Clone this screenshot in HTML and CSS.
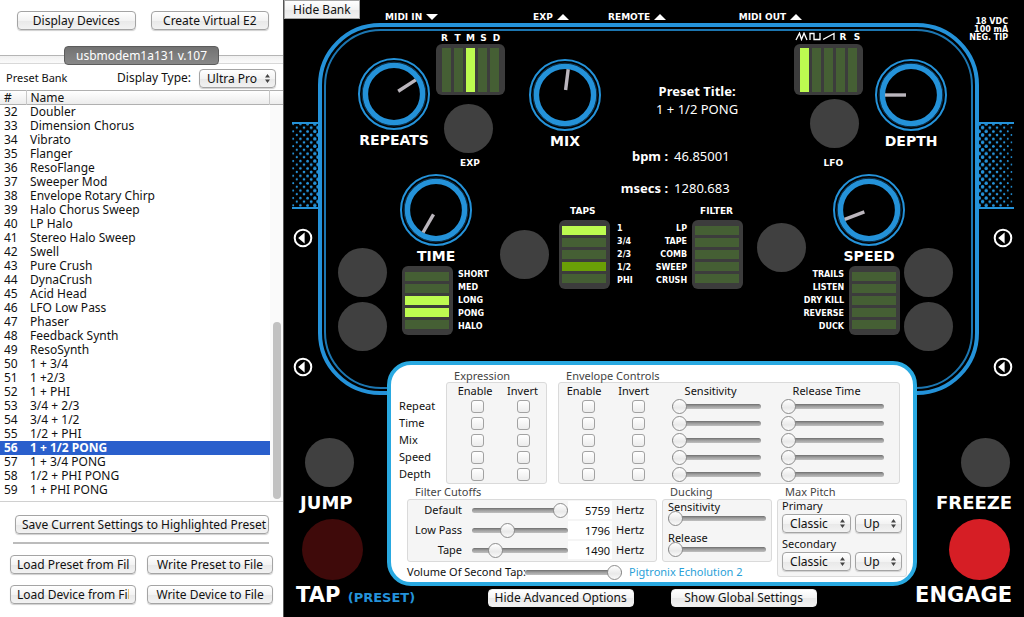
FILE: index.html
```html
<!DOCTYPE html>
<html lang="en">
<head>
<meta charset="utf-8">
<title>Echolution 2 Editor</title>
<link rel="stylesheet" href="styles.css">
</head>
<body>
<div class="app">
  <aside class="bank">
    <div class="bank-actions">
      <button class="btn">Display Devices</button>
      <button class="btn">Create Virtual E2</button>
    </div>
    <div class="device-tabs"><button class="device-tab">usbmodem1a131 v.107</button></div>
    <div class="bank-bar">
      <span class="bank-title">Preset Bank</span>
      <label for="display-type">Display Type:</label>
      <select id="display-type" class="select select-type"><option>Ultra Pro</option></select>
    </div>
    <div class="list">
      <table class="presets">
        <thead><tr><th class="num">#</th><th>Name</th></tr></thead>
        <tbody>
          <tr><td>32</td><td>Doubler</td></tr>
          <tr><td>33</td><td>Dimension Chorus</td></tr>
          <tr><td>34</td><td>Vibrato</td></tr>
          <tr><td>35</td><td>Flanger</td></tr>
          <tr><td>36</td><td>ResoFlange</td></tr>
          <tr><td>37</td><td>Sweeper Mod</td></tr>
          <tr><td>38</td><td>Envelope Rotary Chirp</td></tr>
          <tr><td>39</td><td>Halo Chorus Sweep</td></tr>
          <tr><td>40</td><td>LP Halo</td></tr>
          <tr><td>41</td><td>Stereo Halo Sweep</td></tr>
          <tr><td>42</td><td>Swell</td></tr>
          <tr><td>43</td><td>Pure Crush</td></tr>
          <tr><td>44</td><td>DynaCrush</td></tr>
          <tr><td>45</td><td>Acid Head</td></tr>
          <tr><td>46</td><td>LFO Low Pass</td></tr>
          <tr><td>47</td><td>Phaser</td></tr>
          <tr><td>48</td><td>Feedback Synth</td></tr>
          <tr><td>49</td><td>ResoSynth</td></tr>
          <tr><td>50</td><td>1 + 3/4</td></tr>
          <tr><td>51</td><td>1 +2/3</td></tr>
          <tr><td>52</td><td>1 + PHI</td></tr>
          <tr><td>53</td><td>3/4 + 2/3</td></tr>
          <tr><td>54</td><td>3/4 + 1/2</td></tr>
          <tr><td>55</td><td>1/2 + PHI</td></tr>
          <tr class="selected"><td>56</td><td>1 + 1/2 PONG</td></tr>
          <tr><td>57</td><td>1 + 3/4 PONG</td></tr>
          <tr><td>58</td><td>1/2 + PHI PONG</td></tr>
          <tr><td>59</td><td>1 + PHI PONG</td></tr>
        </tbody>
      </table>
      <div class="scroll"><div class="scroll-thumb"></div></div>
    </div>
    <div class="bank-foot">
      <button class="btn save">Save Current Settings to Highlighted Preset</button>
      <hr class="rule">
      <div class="file-actions">
        <button class="btn"><span class="clip">Load Preset from File</span></button>
        <button class="btn">Write Preset to File</button>
        <button class="btn"><span class="clip">Load Device from File</span></button>
        <button class="btn">Write Device to File</button>
      </div>
    </div>
  </aside>

  <main class="pedal">
    <svg class="defs" width="0" height="0" aria-hidden="true">
      <defs>
        <symbol id="dial" viewBox="-37 -37 74 74">
          <circle r="35" fill="#000" stroke="#2492d9" stroke-width="2"/>
          <circle r="32" fill="none" stroke="#0c3552" stroke-width="1"/>
          <circle r="28.6" fill="none" stroke="#2492d9" stroke-width="5.4"/>
        </symbol>
        <symbol id="jack" viewBox="0 0 20 20">
          <circle cx="10" cy="10" r="8.3" fill="#000" stroke="#fff" stroke-width="2"/>
          <path d="M5.2 10 11.6 4.6V15.4Z" fill="#fff"/>
        </symbol>
        <pattern id="dots-right" width="36" height="7.4" patternUnits="userSpaceOnUse">
          <g fill="#2492d9">
            <circle cx="1" cy="2" r="2"/><circle cx="4.6" cy="5.6" r="1.8"/><circle cx="8.2" cy="2" r="1.7"/><circle cx="11.8" cy="5.6" r="1.5"/><circle cx="15.4" cy="2" r="1.4"/><circle cx="19" cy="5.6" r="1.3"/><circle cx="22.6" cy="2" r="1.2"/><circle cx="26.2" cy="5.6" r="1.1"/><circle cx="29.8" cy="2" r="1"/><circle cx="33.4" cy="5.6" r=".9"/>
          </g>
        </pattern>
        <pattern id="dots-left" width="27" height="7.4" patternUnits="userSpaceOnUse">
          <g fill="#2492d9">
            <circle cx="1.2" cy="2" r="1"/><circle cx="4.8" cy="5.6" r="1.1"/><circle cx="8.4" cy="2" r="1.2"/><circle cx="12" cy="5.6" r="1.3"/><circle cx="15.6" cy="2" r="1.4"/><circle cx="19.2" cy="5.6" r="1.5"/><circle cx="22.8" cy="2" r="1.7"/><circle cx="26" cy="5.6" r="1.8"/>
          </g>
        </pattern>
      </defs>
    </svg>

    <section class="deck">
      <svg class="mesh mesh-left" width="27" height="87" aria-hidden="true"><rect width="27" height="87" fill="url(#dots-left)"/><path d="M0 1H27M0 86H27" stroke="#2492d9" stroke-width="2"/></svg>
      <svg class="mesh mesh-right" width="36" height="87" aria-hidden="true"><rect width="36" height="87" fill="url(#dots-right)"/><path d="M0 1H36M0 86H36" stroke="#2492d9" stroke-width="2"/></svg>
      <div class="frame"></div>

      <button class="btn hide-bank">Hide Bank</button>
      <span class="port midi-in">MIDI IN <i class="tri down"></i></span>
      <span class="port exp-in">EXP <i class="tri"></i></span>
      <span class="port remote">REMOTE <i class="tri"></i></span>
      <span class="port midi-out">MIDI OUT <i class="tri"></i></span>
      <p class="power">18 VDC<br>100 mA<br>NEG. TIP</p>

      <label class="knob k-repeats"><svg class="dial" aria-hidden="true" viewBox="-37 -37 74 74"><use href="#dial" x="-37" y="-37" width="74" height="74"/><path d="M0-5V-26" transform="rotate(57)" class="hand"/></svg><input type="range" value="72"><span class="name">REPEATS</span></label>
      <label class="knob k-mix"><svg class="dial" aria-hidden="true" viewBox="-37 -37 74 74"><use href="#dial" x="-37" y="-37" width="74" height="74"/><path d="M0-5V-26" transform="rotate(7)" class="hand"/></svg><input type="range" value="52"><span class="name">MIX</span></label>
      <label class="knob k-depth"><svg class="dial" aria-hidden="true" viewBox="-37 -37 74 74"><use href="#dial" x="-37" y="-37" width="74" height="74"/><path d="M0-5V-26" transform="rotate(270)" class="hand"/></svg><input type="range" value="20"><span class="name">DEPTH</span></label>
      <label class="knob k-time"><svg class="dial" aria-hidden="true" viewBox="-37 -37 74 74"><use href="#dial" x="-37" y="-37" width="74" height="74"/><path d="M0-5V-26" transform="rotate(210)" class="hand"/></svg><input type="range" value="0"><span class="name">TIME</span></label>
      <label class="knob k-speed"><svg class="dial" aria-hidden="true" viewBox="-37 -37 74 74"><use href="#dial" x="-37" y="-37" width="74" height="74"/><path d="M0-5V-26" transform="rotate(249)" class="hand"/></svg><input type="range" value="13"><span class="name">SPEED</span></label>

      <div class="letters l-exp"><span>R</span><span>T</span><span>M</span><span>S</span><span>D</span></div>
      <div class="leds upright led-exp"><i></i><i></i><i class="on"></i><i></i><i></i></div>
      <button class="stomp s-exp" aria-label="EXP"></button>
      <span class="tag t-exp">EXP</span>

      <div class="letters l-lfo">
        <svg width="13" height="9" viewBox="0 0 13 9" aria-hidden="true"><path d="M1 8 4.5 1.2 6.5 7.5 9 1.2 12 8" class="wave"/></svg>
        <svg width="13" height="9" viewBox="0 0 13 9" aria-hidden="true"><path d="M1 8V1.5H5V7.5H11V1" class="wave"/></svg>
        <svg width="13" height="9" viewBox="0 0 13 9" aria-hidden="true"><path d="M0 7.5 11 1.5V8" class="wave"/></svg>
        <span>R</span><span>S</span>
      </div>
      <div class="leds upright led-lfo"><i class="on"></i><i></i><i></i><i></i><i></i></div>
      <button class="stomp s-lfo" aria-label="LFO"></button>
      <span class="tag t-lfo">LFO</span>

      <button class="stomp s-time1" aria-label="Time range"></button>
      <button class="stomp s-time2" aria-label="Pong and halo"></button>
      <button class="stomp s-taps" aria-label="Taps"></button>
      <button class="stomp s-filter" aria-label="Filter"></button>
      <button class="stomp s-speed1" aria-label="Trails and listen"></button>
      <button class="stomp s-speed2" aria-label="Reverse and duck"></button>

      <div class="bank-leds b-time">
        <div class="leds"><i></i><i></i><i class="on"></i><i class="on"></i><i></i></div>
        <ul><li>SHORT</li><li>MED</li><li>LONG</li><li>PONG</li><li>HALO</li></ul>
      </div>
      <span class="tag t-taps">TAPS</span>
      <div class="bank-leds b-taps">
        <div class="leds"><i class="on"></i><i></i><i></i><i class="dim"></i><i></i></div>
        <ul><li>1</li><li>3/4</li><li>2/3</li><li>1/2</li><li>PHI</li></ul>
      </div>
      <span class="tag t-filter">FILTER</span>
      <div class="bank-leds b-filter">
        <ul><li>LP</li><li>TAPE</li><li>COMB</li><li>SWEEP</li><li>CRUSH</li></ul>
        <div class="leds"><i></i><i></i><i></i><i></i><i></i></div>
      </div>
      <div class="bank-leds b-speed">
        <ul><li>TRAILS</li><li>LISTEN</li><li>DRY KILL</li><li>REVERSE</li><li>DUCK</li></ul>
        <div class="leds"><i></i><i></i><i></i><i></i><i></i></div>
      </div>

      <div class="readout">
        <h2>Preset Title:</h2>
        <p class="preset-name">1 + 1/2 PONG</p>
        <dl>
          <dt>bpm :</dt><dd>46.85001</dd>
          <dt>msecs :</dt><dd>1280.683</dd>
        </dl>
      </div>

      <svg class="jack j1" aria-hidden="true"><use href="#jack"/></svg>
      <svg class="jack j2" aria-hidden="true"><use href="#jack"/></svg>
      <svg class="jack j3" aria-hidden="true"><use href="#jack"/></svg>
      <svg class="jack j4" aria-hidden="true"><use href="#jack"/></svg>
    </section>

    <section class="lower">
      <div class="foot foot-left">
        <button class="stomp" aria-label="Jump"></button>
        <span class="foot-name">JUMP</span>
        <button class="stomp big tap" aria-label="Tap"></button>
        <span class="foot-name large">TAP <small>(PRESET)</small></span>
      </div>

      <div class="center">
        <div class="panel">
          <div class="matrix">
            <div class="row-names"><span>Repeat</span><span>Time</span><span>Mix</span><span>Speed</span><span>Depth</span></div>
            <section>
              <h3>Expression</h3>
              <div class="box expression">
                <span class="head">Enable</span><span class="head">Invert</span>
                <input type="checkbox" aria-label="Repeat expression enable"><input type="checkbox" aria-label="Repeat expression invert">
                <input type="checkbox" aria-label="Time expression enable"><input type="checkbox" aria-label="Time expression invert">
                <input type="checkbox" aria-label="Mix expression enable"><input type="checkbox" aria-label="Mix expression invert">
                <input type="checkbox" aria-label="Speed expression enable"><input type="checkbox" aria-label="Speed expression invert">
                <input type="checkbox" aria-label="Depth expression enable"><input type="checkbox" aria-label="Depth expression invert">
              </div>
            </section>
            <section>
              <h3>Envelope Controls</h3>
              <div class="box envelope">
                <span class="head">Enable</span><span class="head">Invert</span><span class="head">Sensitivity</span><span class="head head-rel">Release Time</span>
                <input type="checkbox" aria-label="Repeat envelope enable"><input type="checkbox" aria-label="Repeat envelope invert"><input type="range" class="slider sens" value="0" aria-label="Repeat sensitivity"><input type="range" class="slider rel" value="0" aria-label="Repeat release time">
                <input type="checkbox" aria-label="Time envelope enable"><input type="checkbox" aria-label="Time envelope invert"><input type="range" class="slider sens" value="0" aria-label="Time sensitivity"><input type="range" class="slider rel" value="0" aria-label="Time release time">
                <input type="checkbox" aria-label="Mix envelope enable"><input type="checkbox" aria-label="Mix envelope invert"><input type="range" class="slider sens" value="0" aria-label="Mix sensitivity"><input type="range" class="slider rel" value="0" aria-label="Mix release time">
                <input type="checkbox" aria-label="Speed envelope enable"><input type="checkbox" aria-label="Speed envelope invert"><input type="range" class="slider sens" value="0" aria-label="Speed sensitivity"><input type="range" class="slider rel" value="0" aria-label="Speed release time">
                <input type="checkbox" aria-label="Depth envelope enable"><input type="checkbox" aria-label="Depth envelope invert"><input type="range" class="slider sens" value="0" aria-label="Depth sensitivity"><input type="range" class="slider rel" value="0" aria-label="Depth release time">
              </div>
            </section>
          </div>

          <div class="groups">
            <section>
              <h3>Filter Cutoffs</h3>
              <div class="box cutoffs">
                <label for="cut-default">Default</label><input id="cut-default" type="range" class="slider" value="100"><input type="text" class="value" value="5759" aria-label="Default cutoff"><span>Hertz</span>
                <label for="cut-low">Low Pass</label><input id="cut-low" type="range" class="slider" value="34"><input type="text" class="value" value="1796" aria-label="Low pass cutoff"><span>Hertz</span>
                <label for="cut-tape">Tape</label><input id="cut-tape" type="range" class="slider" value="20"><input type="text" class="value" value="1490" aria-label="Tape cutoff"><span>Hertz</span>
              </div>
            </section>
            <section>
              <h3>Ducking</h3>
              <div class="box ducking">
                <label for="duck-sens">Sensitivity</label><input id="duck-sens" type="range" class="slider" value="0">
                <label for="duck-rel">Release</label><input id="duck-rel" type="range" class="slider" value="0">
              </div>
            </section>
            <section class="pitch-group">
              <h3>Max Pitch</h3>
              <div class="box pitch">
                <label for="pitch-1">Primary</label>
                <div class="pair"><select id="pitch-1" class="select"><option>Classic</option></select><select class="select" aria-label="Primary direction"><option>Up</option></select></div>
                <label for="pitch-2">Secondary</label>
                <div class="pair"><select id="pitch-2" class="select"><option>Classic</option></select><select class="select" aria-label="Secondary direction"><option>Up</option></select></div>
              </div>
            </section>
            <div class="volume">
              <label for="vol">Volume Of Second Tap:</label><input id="vol" type="range" class="slider" value="100">
              <a href="#">Pigtronix Echolution 2</a>
            </div>
          </div>
        </div>
        <div class="toggles">
          <button class="btn">Hide Advanced Options</button>
          <button class="btn">Show Global Settings</button>
        </div>
      </div>

      <div class="foot foot-right">
        <button class="stomp" aria-label="Freeze"></button>
        <span class="foot-name">FREEZE</span>
        <button class="stomp big engage" aria-label="Engage"></button>
        <span class="foot-name large">ENGAGE</span>
      </div>
    </section>
  </main>
</div>
</body>
</html>
```
FILE: styles.css
```css
* { box-sizing: border-box; }
body {
  margin: 0;
  background: #000;
  color: #111;
  font: 11px/14px "Noto Sans", "Open Sans", sans-serif;
}
button, select, input { font: inherit; color: inherit; margin: 0; }
h2, h3, p, ul, dl, dd { margin: 0; padding: 0; font-weight: normal; }
.app { display: flex; min-height: 100vh; }

/* Shared controls */
.btn {
  height: 19px;
  padding: 0 6px;
  border: 1px solid #a4a4a4;
  border-radius: 4px;
  background: linear-gradient(#fff, #f3f3f3 50%, #e8e8e8 51%, #f2f2f2);
  box-shadow: 0 1px 1px #d0d0d0;
  color: #111;
  font-size: 12px;
  line-height: 17px;
  white-space: nowrap;
}
.select {
  appearance: none;
  height: 19px;
  min-width: 0;
  padding: 0 13px 0 7px;
  border: 1px solid #a4a4a4;
  border-radius: 4px;
  background:
    url("data:image/svg+xml,%3Csvg xmlns='http://www.w3.org/2000/svg' width='5' height='9'%3E%3Cpath d='M0 3.5 2.5 0 5 3.5ZM0 5.5H5L2.5 9Z' fill='%23444'/%3E%3C/svg%3E") no-repeat right 5px center,
    linear-gradient(#fff, #f3f3f3 50%, #e8e8e8 51%, #f2f2f2);
  box-shadow: 0 1px 1px #d0d0d0;
  font-size: 12px;
  line-height: 17px;
}
.slider {
  appearance: none;
  display: block;
  width: 100%;
  min-width: 0;
  height: 16px;
  background: none;
}
.slider::-webkit-slider-runnable-track {
  height: 5px;
  border-radius: 3px;
  background: linear-gradient(#6e6e6e, #9a9a9a 40%, #c0c0c0);
}
.slider::-webkit-slider-thumb {
  appearance: none;
  width: 15px;
  height: 15px;
  margin-top: -5px;
  border: 1px solid #8c8c8c;
  border-radius: 50%;
  background: linear-gradient(#fff, #e9e9e9 60%, #fafafa);
}
input[type="checkbox"] {
  appearance: none;
  place-self: center;
  width: 13px;
  height: 13px;
  border: 1px solid #a2a2a2;
  border-radius: 3px;
  background: linear-gradient(#fff, #ececec);
}

/* Preset bank */
.bank {
  display: flex;
  flex-direction: column;
  flex: 0 0 284px;
  border-right: 1px solid #555;
  background: #fff;
}
.bank-actions {
  display: grid;
  grid-template-columns: 1fr 1fr;
  gap: 15px;
  padding: 11px 14px 0 17px;
}
.device-tabs {
  display: flex;
  justify-content: center;
  margin-top: 16px;
  background: linear-gradient(#fff 9px, #b5b5b5 9px, #b5b5b5 10px, #f0f0f0 10px, #fafafa 17px, #d8d8d8 17px, #d8d8d8 18px, #fff 18px);
}
.device-tab {
  height: 19px;
  padding: 0 11px;
  border: 1px solid #5c5c5c;
  border-radius: 4px;
  background: linear-gradient(#727272, #888);
  color: #fff;
  font-size: 12px;
  line-height: 16px;
}
.bank-bar {
  display: flex;
  align-items: center;
  gap: 8px;
  height: 25px;
  padding: 1px 7px 0 6px;
}
.bank-title { margin-right: auto; font-size: 11px; }
.bank-bar label { font-size: 12px; }
.select-type { width: 77px; }
.list {
  display: flex;
  flex: 1;
  min-height: 0;
  border-bottom: 1px solid #d0d0d0;
  background: linear-gradient(#b0b0b0 1px, #fff 1px, #ececec 14px, #b0b0b0 14px, #b0b0b0 15px, #fff 15px);
}
.presets { flex: 1; border-collapse: collapse; align-self: flex-start; font-size: 12px; }
.presets th, .presets td { height: 14px; padding: 0 0 0 4px; text-align: left; line-height: 14px; }
.presets th { height: 15px; font-weight: normal; border-right: 1px solid #c8c8c8; }
.presets .num { width: 26px; }
.presets .selected { background: #2a5fcc; color: #fff; font-weight: bold; }
.scroll { width: 13px; margin-top: 15px; padding: 217px 2px 0 3px; background: #fafafa; }
.scroll-thumb { height: 177px; border-radius: 4px; background: #c1c1c1; }
.bank-foot { padding: 13px 10px; }
.save { display: block; width: calc(100% - 9px); margin: 0 auto 0 5px; }
.rule { margin: 8px 4px 11px 3px; border: 0; border-top: 2px solid #bcbcbc; }
.file-actions { display: grid; grid-template-columns: 1fr 1fr; gap: 11px; }
.file-actions .btn { min-width: 0; }
.clip { display: block; overflow: hidden; text-align: left; }

/* Pedal face */
.pedal {
  display: flex;
  flex-direction: column;
  flex: 1 0 740px;
  background: #000;
  color: #fff;
  font-family: "DejaVu Sans", Verdana, sans-serif;
}
.defs { position: absolute; }
.deck { position: relative; height: 361px; }
.deck > * { position: absolute; }
.frame {
  left: 34px;
  right: 45px;
  top: 23px;
  height: 372px;
  border: 4px solid #2492d9;
  border-radius: 62px;
  background: #000;
}
.frame::after {
  content: "";
  position: absolute;
  inset: 2px;
  border: 2px solid #1c76b1;
  border-radius: 57px;
}
.mesh { top: 122px; }
.mesh-left { left: 8px; }
.mesh-right { right: 10px; }
.hide-bank {
  left: 0;
  top: 0;
  padding: 0 8px;
  border-radius: 0;
  box-shadow: none;
  font-family: "Noto Sans", "Open Sans", sans-serif;
}
.port, .tag, .letters, .power, .bank-leds ul {
  font-size: 8px;
  font-weight: bold;
  line-height: 10px;
  white-space: nowrap;
}
.port { display: flex; align-items: center; gap: 4px; top: 12px; font-size: 9px; }
.tri { border: 6px solid transparent; border-top: 0; border-bottom: 6px solid #fff; }
.tri.down { border-bottom: 0; border-top: 6px solid #fff; }
.midi-in { left: 101px; }
.exp-in { left: calc(50% - 121px); }
.remote { left: calc(50% - 46px); }
.midi-out { right: 222px; }
.power { right: 16px; top: 18px; text-align: right; line-height: 8px; }

.knob { width: 74px; text-align: center; }
.dial { display: block; width: 74px; height: 74px; }
.hand { stroke: #bbb6bd; stroke-width: 3.4; fill: none; }
.knob input { position: absolute; inset: 0; width: 74px; height: 74px; opacity: 0; }
.name { display: block; margin: 1px -10px 0; font-size: 14px; font-weight: bold; line-height: 16px; }
.k-repeats { left: 73px; top: 57px; }
.k-mix { left: calc(50% - 126px); top: 58px; }
.k-depth { right: 76px; top: 58px; }
.k-time { left: 115px; top: 173px; }
.k-speed { right: 118px; top: 173px; }

.leds {
  display: grid;
  grid-template-rows: repeat(5, 9px);
  gap: 3px;
  width: 51px;
  padding: 6px 4px 6px 3px;
  border-radius: 6px;
  background: #3c3c3c;
}
.leds i { background: #455f34; }
.leds .on { background: #bdfb50; }
.leds .dim { background: #6a9f06; }
.leds.upright {
  grid-template: 44px / repeat(5, 9px);
  width: 69px;
  padding: 4px 6px 3px;
}
.led-exp { left: 152px; top: 44px; }
.led-lfo { right: 161px; top: 44px; }
.letters { display: grid; grid-template-columns: repeat(5, 13px); justify-items: center; font-size: 9px; }
.l-exp { left: 154px; top: 33px; }
.l-lfo { right: 160px; top: 32px; grid-template-columns: repeat(5, 14px); }
.wave { fill: none; stroke: #fff; stroke-width: 1.3; }

.stomp {
  width: 49px;
  height: 49px;
  padding: 0;
  border: 0;
  border-radius: 50%;
  background: #404040;
}
.s-exp { left: 160px; top: 104px; }
.s-lfo { right: 165px; top: 99px; }
.s-time1 { left: 54px; top: 248px; }
.s-time2 { left: 54px; top: 302px; }
.s-taps { left: calc(50% - 154px); top: 230px; }
.s-filter { left: calc(50% + 103px); top: 223px; }
.s-speed1 { right: 71px; top: 248px; }
.s-speed2 { right: 71px; top: 302px; }
.tag { font-size: 9px; }
.t-exp { left: 176px; top: 158px; }
.t-lfo { right: 181px; top: 158px; }
.t-taps { left: calc(50% - 84px); top: 206px; }
.t-filter { left: calc(50% + 46px); top: 206px; }

.bank-leds { display: flex; gap: 5px; align-items: center; }
.bank-leds ul { list-style: none; line-height: 13px; }
.b-time { left: 118px; top: 266px; }
.b-taps { left: calc(50% - 95px); top: 220px; gap: 7px; }
.b-filter { right: 281px; top: 220px; text-align: right; }
.b-speed { right: 124px; top: 266px; text-align: right; }

.readout {
  left: calc(50% - 40px);
  top: 82px;
  width: 166px;
  font: 13px/18px "Noto Sans", "Open Sans", sans-serif;
  text-align: center;
}
.readout h2 { font-size: 13px; font-weight: bold; }
.readout dl {
  display: grid;
  grid-template-columns: 54px 1fr;
  column-gap: 6px;
  row-gap: 14px;
  margin-top: 29px;
  text-align: left;
}
.readout dt { font-weight: bold; text-align: right; white-space: nowrap; }

.jack { width: 20px; height: 20px; }
.j1 { left: 9px; top: 228px; }
.j2 { left: 9px; top: 357px; }
.j3 { right: 11px; top: 228px; }
.j4 { right: 11px; top: 357px; }

/* Foot switches and advanced panel */
.lower { display: grid; grid-template-columns: 103px 1fr 107px; position: relative; }
.foot { display: flex; flex-direction: column; padding-top: 77px; white-space: nowrap; }
.foot-left { padding-left: 12px; align-items: flex-start; }
.foot-left .stomp { margin-left: 9px; }
.foot-left .big { margin-left: 6px; }
.foot-right { padding-right: 12px; align-items: flex-end; }
.foot-right .stomp { margin-right: 2px; }
.foot-name { margin: 6px 0; font-size: 18px; font-weight: bold; line-height: 20px; }
.foot-left .foot-name { margin-left: 4px; }
.foot-name.large { margin: 3px 0; font-size: 21px; line-height: 24px; }
.foot-left .large { margin: 3px 0; }
.foot-name small { color: #2492d9; font-size: 13px; }
.stomp.big { width: 61px; height: 61px; }
.tap { background: #3f0a0a; }
.engage { background: #d61e25; }

.center { min-width: 0; color: #111; font-family: "Noto Sans", "Open Sans", sans-serif; }
.panel {
  padding: 4px 0 0;
  border: 4px solid #29a9e1;
  border-radius: 24px;
  background: #fff;
}
.panel h3 { padding-left: 8px; color: #444; font-size: 11px; line-height: 13px; }
.box { border: 1px solid #dadada; border-radius: 3px; background: #f5f5f5; }
.matrix {
  display: grid;
  grid-template-columns: 36px 101px 1fr;
  column-gap: 11px;
  padding: 0 13px 0 8px;
}
.row-names { display: grid; grid-auto-rows: 17px; align-items: center; padding-top: 28px; }
.expression, .envelope { display: grid; grid-template-rows: 15px; grid-auto-rows: 17px; align-items: center; }
.expression { grid-template-columns: 60px 32px; }
.envelope { grid-template-columns: 59px 40px 114fr 127fr; }
.head { padding-right: 9px; line-height: 12px; text-align: center; white-space: nowrap; }
.head-rel { padding-right: 18px; }
.expression .head { padding-right: 4px; }
.envelope .sens { width: auto; margin: 0 11px 0 14px; }
.envelope .rel { width: auto; margin: 0 15px 0 9px; }

.groups {
  display: grid;
  grid-template-columns: 250px 110px 1fr;
  grid-template-rows: 78px 20px;
  column-gap: 5px;
  padding: 0 6px 0 16px;
}
.groups h3 { line-height: 15px; }
.cutoffs {
  display: grid;
  grid-template-columns: 54px 1fr 44px 44px;
  grid-auto-rows: 20px;
  align-items: center;
  height: 63px;
}
.cutoffs label { text-align: right; white-space: nowrap; }
.cutoffs .slider { width: auto; margin-left: 10px; }
.value {
  width: 100%;
  min-width: 0;
  height: 18px;
  padding: 0 2px;
  border: 0;
  background: #fff;
  text-align: right;
}
.cutoffs span { padding-left: 4px; }
.ducking {
  display: grid;
  grid-template-rows: 13px 8px 23px 8px;
  align-items: center;
  height: 63px;
  padding: 1px 5px;
}
.ducking label { align-self: end; }
.pitch-group { grid-row: 1 / 3; grid-column: 3; }
.pitch { padding: 0 4px 5px; }
.pitch label { display: block; padding-bottom: 3px; line-height: 11px; }
.pair { display: grid; grid-template-columns: 70fr 47fr; gap: 4px; margin-bottom: 5px; }
.pair:last-child { margin-bottom: 0; }
.volume { grid-column: 1 / 3; display: grid; grid-template-columns: 118px 97px 1fr; align-items: center; white-space: nowrap; }
.volume a { padding-left: 7px; color: #2a9fd8; text-decoration: none; }
.toggles { display: flex; justify-content: center; gap: 37px; padding-top: 3px; }
.toggles .btn { width: 146px; height: 18px; border-color: #eee; box-shadow: none; line-height: 16px; }
```
